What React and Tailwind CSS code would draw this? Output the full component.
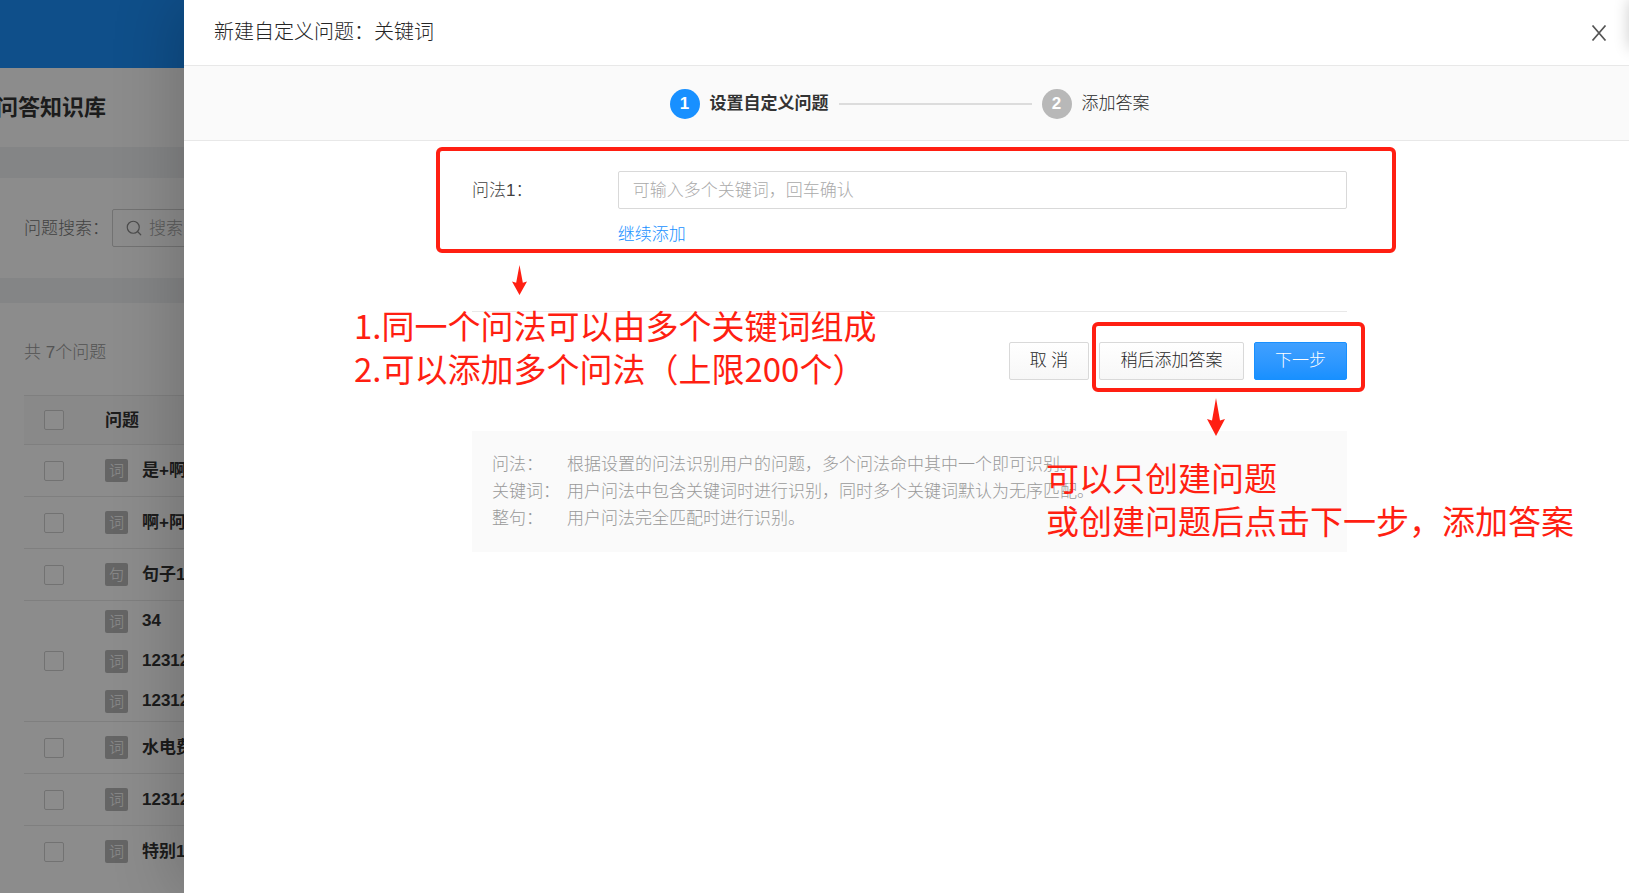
import React, { useState } from "react";
import { Search } from "lucide-react";

const questionRows = [
  { id: 1, items: [{ tag: "词", text: "是+啊" }] },
  { id: 2, items: [{ tag: "词", text: "啊+阿" }] },
  { id: 3, items: [{ tag: "句", text: "句子1" }] },
  {
    id: 4,
    items: [
      { tag: "词", text: "34" },
      { tag: "词", text: "12312" },
      { tag: "词", text: "12312" },
    ],
  },
  { id: 5, items: [{ tag: "词", text: "水电费" }] },
  { id: 6, items: [{ tag: "词", text: "12312" }] },
  { id: 7, items: [{ tag: "词", text: "特别1" }] },
];

const tips = [
  {
    name: "问法：",
    text: "根据设置的问法识别用户的问题，多个问法命中其中一个即可识别。",
  },
  {
    name: "关键词：",
    text: "用户问法中包含关键词时进行识别，同时多个关键词默认为无序匹配。",
  },
  { name: "整句：", text: "用户问法完全匹配时进行识别。" },
];

const Checkbox = ({ label }) => (
  <input
    type="checkbox"
    aria-label={label}
    className="block w-5 h-5 appearance-none rounded-xs border border-[#d0d0d0] bg-white"
  />
);

const QuestionTable = () => (
  <table className="w-full border-collapse text-left">
    <thead>
      <tr className="h-[49px] border-y border-[#e8e8e8] bg-[#fafafa]">
        <th className="w-[61px] pl-5">
          <Checkbox label="全选" />
        </th>
        <th className="pl-5 pt-0.5 font-bold text-[#333]">问题</th>
      </tr>
    </thead>
    <tbody>
      {questionRows.map((row) => (
        <tr
          key={row.id}
          className="h-[52px] border-b border-[#e8e8e8] last:border-b-0"
        >
          <td className="pl-5">
            <Checkbox label={`选择问题${row.id}`} />
          </td>
          <td className="pl-5">
            {row.items.map((item, i) => (
              <div key={i} className="flex items-center h-10 gap-3.5">
                <span className="flex items-center justify-center shrink-0 w-[23px] h-[23px] rounded-xs bg-[#b9b9b9] text-[15px] leading-none text-white">
                  {item.tag}
                </span>
                <span className="font-bold text-[#333] whitespace-nowrap">
                  {item.text}
                </span>
              </div>
            ))}
          </td>
        </tr>
      ))}
    </tbody>
  </table>
);

// knowledge base page behind the drawer
const KnowledgePage = () => (
  <div className="flex flex-col min-h-screen bg-[#f0f2f5]">
    <header className="h-[68px] bg-[#1d90fc]" />
    <div className="flex items-center h-[79px] bg-white">
      <h1 className="-ml-1 text-[22px] font-bold text-[#333]">问答知识库</h1>
    </div>

    <div className="flex items-center h-[100px] mt-[31px] px-6 bg-white">
      <label htmlFor="search" className="w-[88px] pt-0.5 text-[#777]">
        问题搜索：
      </label>
      <div className="flex items-center gap-1.5 w-[400px] h-[38px] px-3 rounded-xs border border-[#cfcfcf]">
        <Search size={18} strokeWidth={1.6} className="text-[#8a8a8a]" />
        <input
          id="search"
          placeholder="搜索"
          className="flex-1 pt-0.5 outline-none placeholder:text-[#a6a6a6]"
        />
      </div>
    </div>

    <div className="flex-1 mt-[25px] pt-9 px-6 bg-white">
      <p className="h-14 leading-7 text-[#999]">共 7个问题</p>
      <QuestionTable />
    </div>
  </div>
);

const Steps = () => (
  <ol className="flex items-center w-[480px] mx-auto">
    <li className="flex flex-1 items-center gap-2.5 font-bold text-[#333]">
      <span className="flex items-center justify-center w-[30px] h-[30px] rounded-full bg-[#1890ff] text-white">
        1
      </span>
      设置自定义问题
      <span className="flex-1 h-0.5 mr-2.5 bg-[#dcdcdc]" />
    </li>
    <li className="flex items-center gap-2.5 text-[#262626]">
      <span className="flex items-center justify-center w-[30px] h-[30px] rounded-full bg-[#b8b8b8] font-bold text-white">
        2
      </span>
      添加答案
    </li>
  </ol>
);

const Drawer = () => {
  const [keyword, setKeyword] = useState("");

  return (
    <section className="absolute inset-y-0 left-[184px] -right-1.5 bg-white shadow-[-8px_0_60px_rgba(0,0,0,0.2)]">
      <header className="flex items-center justify-between h-[66px] pl-[30px] pr-[26px] border-b border-[#e8e8e8]">
        <h2 className="pb-0.5 text-xl text-[#262626]">
          新建自定义问题：关键词
        </h2>
        <button aria-label="关闭" className="p-0.5">
          <svg width="16" height="16" viewBox="0 0 16 16" fill="none">
            <path
              d="M1.5 .5l13 15M14.5 .5l-13 15"
              stroke="#555"
              strokeWidth="1.7"
            />
          </svg>
        </button>
      </header>

      <div className="flex items-center h-[75px] pt-0.5 border-b border-[#e8e8e8] bg-[#fafafa]">
        <Steps />
      </div>

      <div className="w-[875px] mx-auto pt-[30px]">
        <div className="flex">
          <label htmlFor="ask" className="w-1/6 leading-10 text-[#404040]">
            问法1：
          </label>
          <div className="flex-1">
            <input
              id="ask"
              value={keyword}
              onChange={(e) => setKeyword(e.target.value)}
              placeholder="可输入多个关键词，回车确认"
              className="block w-full h-[38px] px-3.5 pt-0.5 rounded-xs border border-[#d9d9d9] outline-none placeholder:text-[#aaa]"
            />
            <a href="#add" className="block mt-3 leading-7 text-[#1890ff]">
              继续添加
            </a>
          </div>
        </div>

        <div className="flex justify-end gap-2.5 mt-[62px] pt-[30px] border-t border-[#e8e8e8]">
          <button className="w-20 h-[38px] rounded-xs border border-[#d9d9d9] bg-linear-to-b from-white to-[#f7f7f7] text-[#262626]">
            取 消
          </button>
          <button className="w-[145px] h-[38px] rounded-xs border border-[#d9d9d9] bg-linear-to-b from-white to-[#f7f7f7] text-[#262626]">
            稍后添加答案
          </button>
          <button className="w-[93px] h-[38px] rounded-xs border border-[#1890ff] bg-linear-to-b from-[#40a0ff] to-[#1890ff] text-white">
            下一步
          </button>
        </div>

        <dl className="mt-[51px] p-5 bg-[#fafafa] leading-[27px] text-[#999]">
          {tips.map((tip) => (
            <div key={tip.name} className="flex">
              <dt className="w-[75px]">{tip.name}</dt>
              <dd>{tip.text}</dd>
            </div>
          ))}
        </dl>
      </div>
    </section>
  );
};

const Arrow = ({ className }) => (
  <svg viewBox="0 0 18 38" preserveAspectRatio="none" className={className}>
    <path d="M9 0L13 22.5L18 21L9 38L0 21L5 22.5Z" fill="#ff1f12" />
  </svg>
);

// red marks and notes drawn over the page
const Notes = () => (
  <div className="absolute inset-0 pointer-events-none text-[33px] font-normal leading-[43px] text-[#ff1f12] whitespace-nowrap font-['Noto_Sans_CJK_SC',sans-serif]">
    <div className="absolute left-[436px] top-[147px] w-[960px] h-[106px] rounded-md border-4 border-[#ff1f12]" />
    <Arrow className="absolute left-[512px] top-[265px] w-[15px] h-[30px]" />
    <p className="absolute left-[354px] top-[304px]">
      1.同一个问法可以由多个关键词组成
      <br />
      2.可以添加多个问法（上限200个）
    </p>

    <div className="absolute left-[1092px] top-[322px] w-[273px] h-[70px] rounded-md border-4 border-[#ff1f12]" />
    <Arrow className="absolute left-[1207px] top-[398px] w-[18px] h-[38px]" />
    <p className="absolute left-[1046px] top-[456px]">
      可以只创建问题
      <br />
      或创建问题后点击下一步，添加答案
    </p>
  </div>
);

const App = () => (
  <div className="relative min-h-screen overflow-hidden text-[17px] font-light font-['Liberation_Sans','Noto_Sans_CJK_SC',sans-serif]">
    <KnowledgePage />
    <div className="absolute inset-0 bg-black/45" />
    <Drawer />
    <div className="absolute left-full top-0 w-10 h-12 shadow-[0_0_16px_rgba(0,0,0,0.2)]" />
    <Notes />
  </div>
);

export default App;
